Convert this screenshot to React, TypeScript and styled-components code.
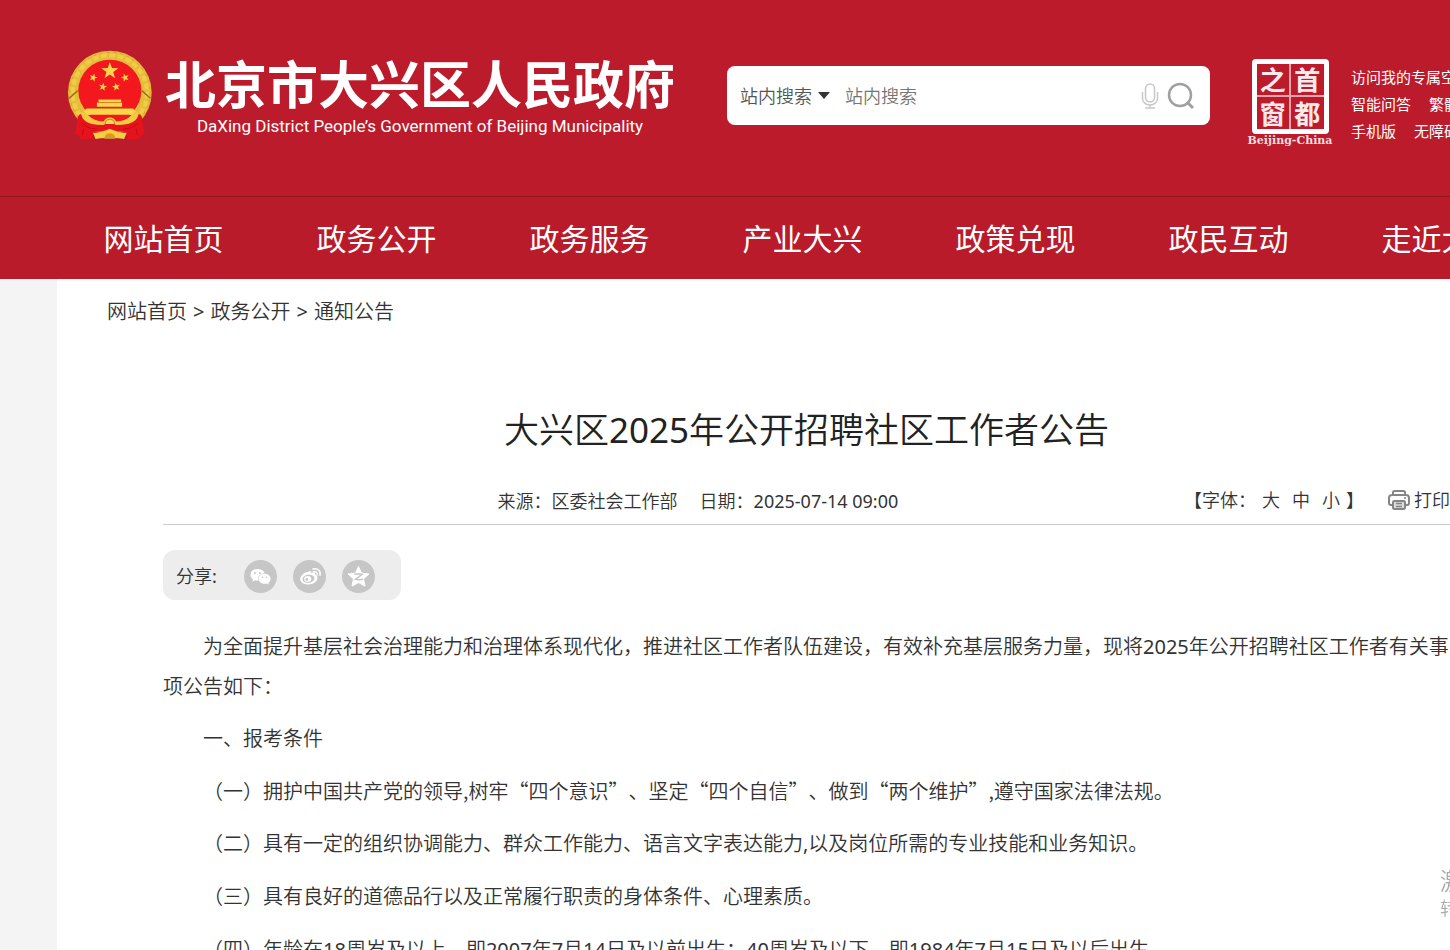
import React from "react";
import styled, { createGlobalStyle } from "styled-components";

const latinFirst = `"Noto Sans", "Noto Sans CJK SC DemiLight", "Noto Sans CJK SC", sans-serif`;
const cjkFirst = `"Noto Sans CJK SC", "Noto Sans", sans-serif`;

const GlobalStyle = createGlobalStyle`
  * { box-sizing: border-box; }
  body {
    margin: 0;
    background: #f4f4f4;
    color: #333;
    font-family: ${latinFirst};
    font-weight: 400;
    text-spacing-trim: space-all;
  }
  a { color: inherit; text-decoration: none; }
  button, input, select { font: inherit; color: inherit; border: 0; background: none; padding: 0; margin: 0; outline: 0; }
  svg { display: block; flex: none; }
`;

const Page = styled.div`
  min-height: 100vh;
  overflow: hidden;
`;

const Header = styled.header`
  background: #bc1b2c;
  color: #fff;
`;

const Banner = styled.div`
  display: flex;
  align-items: center;
  height: 196px;
  padding: 0 0 5px 66px;
`;

const Brand = styled.a`
  display: flex;
  flex: none;
  align-items: center;
  gap: 12px;
`;

const BrandText = styled.div`
  display: flex;
  flex-direction: column;
  align-items: center;
  white-space: nowrap;
`;

const SiteName = styled.strong`
  font: 700 51px/56px ${cjkFirst};
`;

const SiteNameEn = styled.span`
  margin-top: 4px;
  font: 400 17px/24px Roboto, sans-serif;
`;

const SearchForm = styled.form`
  display: flex;
  flex: 1 0 483px;
  max-width: 483px;
  align-items: center;
  height: 59px;
  margin-left: 52px;
  padding: 0 15px 0 13px;
  border-radius: 8px;
  background: #fff;
  color: #555;
  font-size: 18px;
`;

const ScopeField = styled.label`
  display: flex;
  align-items: center;
  gap: 6px;
  margin-right: 15px;
`;

const ScopeSelect = styled.select`
  appearance: none;
  width: 72px;
`;

const SearchInput = styled.input`
  flex: 1;
  min-width: 0;
  &::placeholder { color: #757575; opacity: 1; }
`;

const IconButton = styled.button`
  display: flex;
  margin-left: 8px;
  cursor: pointer;
`;

const Seal = styled.a`
  display: flex;
  flex: none;
  flex-direction: column;
  align-items: center;
  width: 84px;
  margin: 15px 19px 0 38px;
`;

const SealFrame = styled.span`
  display: grid;
  grid-template-columns: 1fr 1fr;
  gap: 2px;
  width: 77px;
  height: 75px;
  border: 5px solid #fff;
  border-radius: 4px;
  background: #e9a3aa;
`;

const SealChar = styled.span`
  display: flex;
  align-items: center;
  justify-content: center;
  background: #bc1b2c;
  color: #fbe9eb;
  font: 700 26px/30px ${cjkFirst};
`;

const SealCaption = styled.span`
  color: #f8dcdf;
  font: 700 11px/14px "DejaVu Serif", serif;
  white-space: nowrap;
`;

const QuickLinks = styled.nav`
  flex: none;
  margin-top: 15px;
  font-family: ${cjkFirst};
  font-size: 15px;
  line-height: 27px;
  white-space: nowrap;
`;

const QuickRow = styled.div`
  display: flex;
  gap: 18px;
`;

const MainNav = styled.nav`
  display: flex;
  height: 83px;
  padding: 0 0 0 57px;
  border-top: 1px solid #94141f;
  background: #b91b2b;
  font-family: ${cjkFirst};
`;

const NavItem = styled.a`
  flex: 1 0 213px;
  font-size: 30px;
  line-height: 80px;
  text-align: center;
  white-space: nowrap;
`;

const Main = styled.main`
  margin-left: 57px;
  padding-bottom: 20px;
  background: #fff;
`;

const Breadcrumb = styled.nav`
  display: flex;
  gap: 6px;
  padding: 13px 50px 11px;
  font-size: 20px;
  line-height: 40px;
`;

const Article = styled.article`
  padding: 63px 0 0 106px;
`;

const Title = styled.h1`
  margin: 0;
  color: #222;
  font-size: 35px;
  font-weight: 400;
  line-height: 48px;
  text-align: center;
`;

const Meta = styled.div`
  display: flex;
  align-items: center;
  justify-content: space-between;
  margin-top: 24px;
  padding-left: 26%;
  border-bottom: 1px solid #ccc;
  font-size: 18px;
  line-height: 46px;
  white-space: nowrap;
`;

const MetaGroup = styled.div`
  display: flex;
  gap: 22px;
`;

const Tools = styled.div`
  display: flex;
  align-items: center;
  margin-top: -2px;
`;

const SizeButton = styled.button`
  width: 30px;
  cursor: pointer;
`;

const PrintButton = styled.button`
  display: flex;
  align-items: center;
  gap: 4px;
  margin-left: 24px;
  cursor: pointer;
`;

const Share = styled.div`
  display: flex;
  align-items: center;
  gap: 16px;
  width: 238px;
  height: 50px;
  margin: 25px 0 27px;
  padding: 2px 13px 0;
  border-radius: 12px;
  background: #ededed;
  font-size: 18px;
`;

const ShareLabel = styled.span`
  width: 52px;
  line-height: 48px;
`;

const ShareButton = styled.button`
  display: flex;
  cursor: pointer;
`;

const Paragraph = styled.p<{ $cjk?: boolean }>`
  margin: 0 0 12px;
  font-family: ${(p) => (p.$cjk ? cjkFirst : latinFirst)};
  font-size: 20px;
  font-weight: ${(p) => (p.$cjk ? 350 : 400)};
  line-height: 40px;
  text-indent: 2em;

  & + & { margin-bottom: 13px; }
  & + &:nth-of-type(even) { margin-bottom: 12px; }
`;

const Notice = styled.aside`
  position: fixed;
  right: 0;
  bottom: 30px;
  width: 10px;
  overflow: hidden;
  color: #aaa;
  white-space: nowrap;
  pointer-events: none;
`;

const NoticeTitle = styled.div`
  font-size: 24px;
  line-height: 30px;
`;

const NoticeText = styled.div`
  font-size: 18px;
  line-height: 24px;
`;

const star = (cx: number, cy: number, r: number, turn = 0) =>
  Array.from({ length: 10 }, (_, i) => {
    const d = i % 2 ? r * 0.4 : r;
    const a = -Math.PI / 2 + (i * Math.PI) / 5 + turn;
    return `${cx + d * Math.cos(a)},${cy + d * Math.sin(a)}`;
  }).join(" ");

const Emblem = () => (
  <svg width="87" height="92" viewBox="48 45 260 277" aria-hidden="true">
    <circle cx="179" cy="173" r="126" fill="#e6bd3a" />
    <circle cx="179" cy="173" r="112" fill="none" stroke="#f0cc48" strokeWidth="12" strokeDasharray="18 7" />
    <circle cx="179" cy="173" r="121" fill="none" stroke="#d5a030" strokeWidth="3" strokeDasharray="8 12" />
    <ellipse cx="179" cy="167" rx="95" ry="93" fill="#f3171e" />
    <path d="M57 190l25-22M301 190l-25-22" stroke="#8e6a1e" strokeWidth="4" />
    <g fill="#fbd64b">
      <polygon points={star(179, 108, 27)} />
      <polygon points={star(129, 128, 13, 0.3)} />
      <polygon points={star(225, 128, 13, -0.3)} />
      <polygon points={star(158, 156, 13, 0.2)} />
      <polygon points={star(198, 156, 13, -0.2)} />
      <path d="M145 194h68v8h-68zM140 204h76v12h-76z" />
      <path d="M109 221h140l8 9-10 10H110l-10-10z" />
    </g>
    <path d="M140 203h76M112 221h134" stroke="#c9861f" strokeWidth="2" />
    <path d="M112 241h134l-16 20H128z" fill="#f3171e" />
    <path d="M94 232l18 8q20 20 48 20 6-12 19-12t19 12q28 0 48-20l18-8-4 36q-40 22-81 12-41 10-81-12z" fill="#f2ca42" />
    <path d="M92 238q6 24 30 29 18 4 38 4 8-6 19-6t19 6q20 0 38-4 24-5 30-29 12 4 10 18l8 42q-14 4-18 16l-34-2-4-20q-28 0-49-10-21 10-49 10l-4 20-34 2q-4-12-18-16l8-42q-2-14 10-18z" fill="#e6131c" />
    <path d="M94 264q12 16 46 20M264 264q-12 16-46 20M100 282l-4 20M258 282l4 20" fill="none" stroke="#b80f19" strokeWidth="3" />
    <path d="M165 268q0-14 14-14t14 14" fill="#f7d75a" stroke="#c9861f" strokeWidth="3" />
    <path d="M128 294q28 2 51-10 23 12 51 10l-8 19q-25-5-43-2-18-3-43 2z" fill="#f4cf3f" />
    <path d="M162 312q2-16 17-16t17 16z" fill="#d99b28" />
  </svg>
);

const MicIcon = () => (
  <svg width="18" height="26" viewBox="0 0 18 26" fill="none" stroke="#c8c8c8" strokeWidth="1.5" aria-hidden="true">
    <rect x="4.5" y="1" width="9" height="18" rx="4.5" />
    <path d="M1.500 9v6.500a7.500 6.500 0 0 0 15 0V9M9 22v3M4 25h10" />
  </svg>
);

const SearchIcon = () => (
  <svg width="28" height="28" viewBox="0 0 28 28" fill="none" stroke="#a0a0a0" strokeWidth="2.500" aria-hidden="true">
    <circle cx="13" cy="13" r="11" />
    <path d="M20 20l6 6" strokeWidth="3" />
  </svg>
);

const PrinterIcon = () => (
  <svg width="22" height="20" viewBox="0 0 22 20" fill="none" stroke="#858585" strokeWidth="2" aria-hidden="true">
    <path d="M5 5V2.500Q5 1 6.500 1h9Q17 1 17 2.500V5M5 15H3q-2 0-2-2V8q0-3 3-3h14q3 0 3 3v5q0 2-2 2h-2" />
    <rect x="5" y="11" width="12" height="8" rx="1.500" fill="#ddd" />
    <path d="M8 13.500h6M8 16.500h6M16 8h2" strokeWidth="1.500" />
  </svg>
);

const WechatIcon = () => (
  <svg width="33" height="33" viewBox="0 0 33 33" aria-hidden="true">
    <circle cx="16.500" cy="16.500" r="16.500" fill="#c6c6c6" />
    <path d="M13.500 9c-4.200 0-7 2.700-7 5.900 0 1.900 1 3.500 2.600 4.500l-.8 2.400 2.900-1.500c1 .3 2 .4 3 .3-1-4.400 2.200-7.400 6.400-7.400C20 10.700 17 9 13.500 9z" fill="#fff" />
    <path d="M20.500 13.700c-3.500 0-6 2.300-6 5s2.500 5 6 5c.8 0 1.500-.1 2.200-.3l2.300 1.300-.6-2c1.300-.9 2.200-2.300 2.200-4 0-2.700-2.600-5-6.100-5z" fill="#fff" />
    <g fill="#c6c6c6">
      <circle cx="11" cy="13" r="1" /><circle cx="15.800" cy="13" r="1" />
      <circle cx="18.500" cy="17.300" r=".8" /><circle cx="22.500" cy="17.300" r=".8" />
    </g>
  </svg>
);

const WeiboIcon = () => (
  <svg width="33" height="33" viewBox="0 0 33 33" aria-hidden="true">
    <circle cx="16.500" cy="16.500" r="16.500" fill="#c6c6c6" />
    <path d="M15 12c1.500-1.500 3-1.300 3 .8 2.500-1 4.500-.7 4 1.700 1.600.7 2.500 1.600 2.500 3.300 0 3.400-4 6.700-9 6.700-4.600 0-8.300-2.200-8.300-5.500 0-3 4.500-7.600 7.800-7z" fill="#fff" />
    <ellipse cx="15.500" cy="18.800" rx="6" ry="4.100" fill="#c6c6c6" transform="rotate(-8 15.500 18.800)" />
    <ellipse cx="14.700" cy="19" rx="3.600" ry="3" fill="#fff" />
    <circle cx="13.800" cy="19.500" r="1.400" fill="#c6c6c6" />
    <path d="M20 9c4.500-1.300 8 2 7 6.300M20.600 11.800c2.200-.6 4 .9 3.500 3" fill="none" stroke="#fff" strokeWidth="1.500" strokeLinecap="round" />
  </svg>
);

const QzoneIcon = () => (
  <svg width="33" height="33" viewBox="0 0 33 33" aria-hidden="true">
    <circle cx="16.500" cy="16.500" r="16.500" fill="#c6c6c6" />
    <path d="M16.500 6.500l3 6.600 7.500.9-5.500 4.900 1.500 7.200-6.500-3.500-6.500 3.500 1.500-7.200L6 14l7.500-.9z" fill="#fff" stroke="#fff" strokeLinejoin="round" />
    <path d="M12.500 14.300c2.700-.5 5.300-.5 7.500 0l-6.500 5c2.600.5 5 .5 7.500 0" fill="none" stroke="#c6c6c6" strokeWidth="1.500" />
  </svg>
);

const navItems = ["网站首页", "政务公开", "政务服务", "产业大兴", "政策兑现", "政民互动", "走近大兴"];
const quickLinks = [["访问我的专属空间"], ["智能问答", "繁體版"], ["手机版", "无障碍"]];

const paragraphs = [
  { text: "为全面提升基层社会治理能力和治理体系现代化，推进社区工作者队伍建设，有效补充基层服务力量，现将2025年公开招聘社区工作者有关事项公告如下：" },
  { text: "一、报考条件" },
  { text: "（一）拥护中国共产党的领导,树牢“四个意识”、坚定“四个自信”、做到“两个维护”,遵守国家法律法规。", cjk: true },
  { text: "（二）具有一定的组织协调能力、群众工作能力、语言文字表达能力,以及岗位所需的专业技能和业务知识。" },
  { text: "（三）具有良好的道德品行以及正常履行职责的身体条件、心理素质。" },
  { text: "（四）年龄在18周岁及以上，即2007年7月14日及以前出生；40周岁及以下，即1984年7月15日及以后出生。" },
];

export default function App() {
  return (
    <Page lang="zh-CN">
      <GlobalStyle />
      <Header>
        <Banner>
          <Brand href="#">
            <Emblem />
            <BrandText>
              <SiteName>北京市大兴区人民政府</SiteName>
              <SiteNameEn>DaXing District People’s Government of Beijing Municipality</SiteNameEn>
            </BrandText>
          </Brand>
          <SearchForm role="search" onSubmit={(e) => e.preventDefault()}>
            <ScopeField>
              <ScopeSelect aria-label="搜索范围">
                <option>站内搜索</option>
              </ScopeSelect>
              <svg width="12" height="7" viewBox="0 0 12 7" aria-hidden="true">
                <path d="M0 0h12L6 7z" fill="#333" />
              </svg>
            </ScopeField>
            <SearchInput aria-label="站内搜索" placeholder="站内搜索" />
            <IconButton type="button" aria-label="语音搜索"><MicIcon /></IconButton>
            <IconButton type="submit" aria-label="搜索"><SearchIcon /></IconButton>
          </SearchForm>
          <Seal href="#">
            <SealFrame>
              {["之", "首", "窗", "都"].map((c) => <SealChar key={c}>{c}</SealChar>)}
            </SealFrame>
            <SealCaption>Beijing-China</SealCaption>
          </Seal>
          <QuickLinks>
            {quickLinks.map((row) => (
              <QuickRow key={row[0]}>
                {row.map((label) => <a key={label} href="#">{label}</a>)}
              </QuickRow>
            ))}
          </QuickLinks>
        </Banner>
        <MainNav>
          {navItems.map((label) => <NavItem key={label} href="#">{label}</NavItem>)}
        </MainNav>
      </Header>
      <Main>
        <Breadcrumb>
          <a href="#">网站首页</a>
          <span>&gt;</span>
          <a href="#">政务公开</a>
          <span>&gt;</span>
          <a href="#">通知公告</a>
        </Breadcrumb>
        <Article>
          <Title>大兴区2025年公开招聘社区工作者公告</Title>
          <Meta>
            <MetaGroup>
              <span>来源：区委社会工作部</span>
              <span>日期：2025-07-14 09:00</span>
            </MetaGroup>
            <Tools>
              <span>【字体：</span>
              <SizeButton type="button">大</SizeButton>
              <SizeButton type="button">中</SizeButton>
              <SizeButton type="button">小</SizeButton>
              <span>】</span>
              <PrintButton type="button"><PrinterIcon />打印</PrintButton>
            </Tools>
          </Meta>
          <Share>
            <ShareLabel>分享:</ShareLabel>
            <ShareButton type="button" aria-label="微信"><WechatIcon /></ShareButton>
            <ShareButton type="button" aria-label="微博"><WeiboIcon /></ShareButton>
            <ShareButton type="button" aria-label="QQ空间"><QzoneIcon /></ShareButton>
          </Share>
          {paragraphs.map((p) => (
            <Paragraph key={p.text} $cjk={p.cjk}>{p.text}</Paragraph>
          ))}
        </Article>
      </Main>
      <Notice>
        <NoticeTitle>激活 Windows</NoticeTitle>
        <NoticeText>转到“设置”以激活 Windows。</NoticeText>
      </Notice>
    </Page>
  );
}
